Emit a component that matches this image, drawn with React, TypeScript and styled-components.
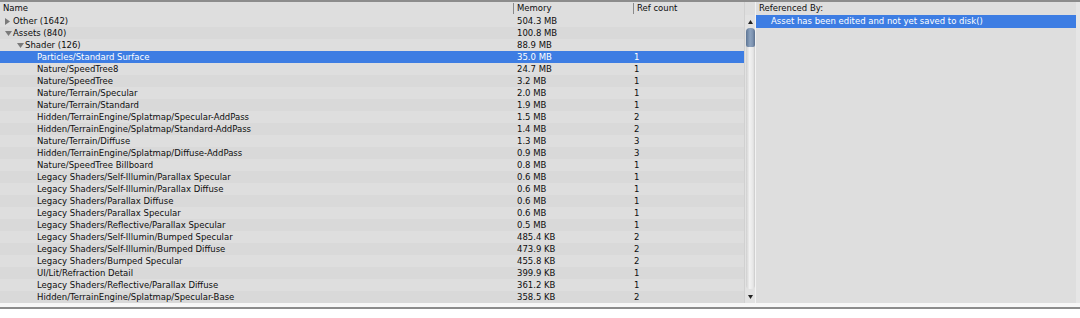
import React from "react";
import styled, { createGlobalStyle } from "styled-components";

const GlobalStyle = createGlobalStyle`
  html, body { margin: 0; padding: 0; background: #ffffff; }
  body { font-family: "DejaVu Sans", Verdana, sans-serif; }
`;

type Row = { name: string; mem: string; refs: string; level: number; toggle?: "open" | "closed"; selected?: boolean };

const rows: Row[] = [
  { name: "Other (1642)", mem: "504.3 MB", refs: "", level: 0, toggle: "closed" },
  { name: "Assets (840)", mem: "100.8 MB", refs: "", level: 0, toggle: "open" },
  { name: "Shader (126)", mem: "88.9 MB", refs: "", level: 1, toggle: "open" },
  { name: "Particles/Standard Surface", mem: "35.0 MB", refs: "1", level: 2, selected: true },
  { name: "Nature/SpeedTree8", mem: "24.7 MB", refs: "1", level: 2 },
  { name: "Nature/SpeedTree", mem: "3.2 MB", refs: "1", level: 2 },
  { name: "Nature/Terrain/Specular", mem: "2.0 MB", refs: "1", level: 2 },
  { name: "Nature/Terrain/Standard", mem: "1.9 MB", refs: "1", level: 2 },
  { name: "Hidden/TerrainEngine/Splatmap/Specular-AddPass", mem: "1.5 MB", refs: "2", level: 2 },
  { name: "Hidden/TerrainEngine/Splatmap/Standard-AddPass", mem: "1.4 MB", refs: "2", level: 2 },
  { name: "Nature/Terrain/Diffuse", mem: "1.3 MB", refs: "3", level: 2 },
  { name: "Hidden/TerrainEngine/Splatmap/Diffuse-AddPass", mem: "0.9 MB", refs: "3", level: 2 },
  { name: "Nature/SpeedTree Billboard", mem: "0.8 MB", refs: "1", level: 2 },
  { name: "Legacy Shaders/Self-Illumin/Parallax Specular", mem: "0.6 MB", refs: "1", level: 2 },
  { name: "Legacy Shaders/Self-Illumin/Parallax Diffuse", mem: "0.6 MB", refs: "1", level: 2 },
  { name: "Legacy Shaders/Parallax Diffuse", mem: "0.6 MB", refs: "1", level: 2 },
  { name: "Legacy Shaders/Parallax Specular", mem: "0.6 MB", refs: "1", level: 2 },
  { name: "Legacy Shaders/Reflective/Parallax Specular", mem: "0.5 MB", refs: "1", level: 2 },
  { name: "Legacy Shaders/Self-Illumin/Bumped Specular", mem: "485.4 KB", refs: "2", level: 2 },
  { name: "Legacy Shaders/Self-Illumin/Bumped Diffuse", mem: "473.9 KB", refs: "2", level: 2 },
  { name: "Legacy Shaders/Bumped Specular", mem: "455.8 KB", refs: "2", level: 2 },
  { name: "UI/Lit/Refraction Detail", mem: "399.9 KB", refs: "1", level: 2 },
  { name: "Legacy Shaders/Reflective/Parallax Diffuse", mem: "361.2 KB", refs: "1", level: 2 },
  { name: "Hidden/TerrainEngine/Splatmap/Specular-Base", mem: "358.5 KB", refs: "2", level: 2 },
];

const Window = styled.div`
  width: 1080px;
  height: 301px;
  display: flex;
  border-top: 2px solid #8c8c8c;
  background: #dedede;
  font-size: 8.5px;
  color: #0e0e0e;
`;

const LeftPane = styled.div`
  width: 744px;
  display: flex;
  flex-direction: column;
`;

const Grid = styled.div`
  display: grid;
  grid-template-columns: 514px 120px 1fr;
  height: 12px;
  line-height: 12px;
  white-space: nowrap;
`;

const HeaderRow = styled(Grid)`
  height: 13px;
  background: #dedede;
`;

const HeaderCell = styled.div<{ $sep?: boolean }>`
  padding-left: 3px;
  border-left: ${(p) => (p.$sep ? "1px solid #8a8a8a" : "none")};
  margin-left: ${(p) => (p.$sep ? -1 : 0)}px;
  height: 11px;
  margin-top: 1px;
  line-height: 11px;
`;

const DataRow = styled(Grid)<{ $odd: boolean; $selected?: boolean }>`
  background: ${(p) => (p.$selected ? "#3d7de3" : p.$odd ? "#d9d9d9" : "#dedede")};
  color: ${(p) => (p.$selected ? "#ffffff" : "#0e0e0e")};
`;

const NameCell = styled.div<{ $level: number }>`
  display: flex;
  align-items: center;
  padding-left: ${(p) => 1 + p.$level * 12}px;
`;

const Toggle = styled.span`
  width: 12px;
  height: 12px;
  display: flex;
  align-items: center;
  justify-content: flex-start;
  padding-left: 4px;
  box-sizing: border-box;
  flex: none;
`;

const Cell = styled.div<{ $pad: number }>`
  padding-left: ${(p) => p.$pad}px;
`;

const Scrollbar = styled.div`
  width: 11px;
  display: flex;
  flex-direction: column;
  align-items: center;
  background: #e2e2e2;
  border-left: 1px solid #d0d0d0;
  box-sizing: border-box;
`;

const ScrollTop = styled.div`
  height: 13px;
  width: 100%;
  background: #dedede;
`;

const ArrowBtn = styled.div`
  height: 13px;
  width: 100%;
  display: flex;
  align-items: center;
  justify-content: center;
  flex: none;
`;

const Track = styled.div`
  flex: 1;
  width: 9px;
  display: flex;
  flex-direction: column;
  border-radius: 4px;
  background: linear-gradient(to right, #cfcfcf, #f2f2f2 40%, #e6e6e6 80%, #c8c8c8);
  margin-bottom: 1px;
`;

const Thumb = styled.div`
  height: 19px;
  width: 9px;
  border-radius: 4px 4px 2px 2px;
  background: linear-gradient(to right, #5d7594, #8da3bf 45%, #7d93b1 75%, #5a6f8c);
`;

const RightPane = styled.div`
  flex: 1;
  display: flex;
  flex-direction: column;
  border-left: 1px solid #f2f2f2;
  border-right: 4px solid #e6e6e6;
  background: #dedede;
`;

const RightHeader = styled.div`
  height: 13px;
  line-height: 13px;
  padding-left: 3px;
`;

const RefRow = styled.div`
  height: 13px;
  line-height: 13px;
  padding-left: 15px;
  background: #3d7de3;
  color: #ffffff;
  white-space: nowrap;
`;

const Bottom = styled.div`
  height: 4px;
  background: #f7f7f7;
  border-bottom: 2px solid #8c8c8c;
`;

const TriRight = () => (
  <svg width="5" height="7" viewBox="0 0 5 7">
    <polygon points="0,0 5,3.5 0,7" fill="#7a7a7a" />
  </svg>
);
const TriDown = () => (
  <svg width="7" height="5" viewBox="0 0 7 5">
    <polygon points="0,0 7,0 3.5,5" fill="#7a7a7a" />
  </svg>
);
const SmallUp = () => (
  <svg width="5" height="4" viewBox="0 0 5 4">
    <polygon points="2.5,0 5,4 0,4" fill="#222" />
  </svg>
);
const SmallDown = () => (
  <svg width="5" height="4" viewBox="0 0 5 4">
    <polygon points="0,0 5,0 2.5,4" fill="#222" />
  </svg>
);

export default function App() {
  return (
    <>
      <GlobalStyle />
      <Window>
        <LeftPane>
          <HeaderRow>
            <HeaderCell>Name</HeaderCell>
            <HeaderCell $sep>Memory</HeaderCell>
            <HeaderCell $sep>Ref count</HeaderCell>
          </HeaderRow>
          {rows.map((r, i) => (
            <DataRow key={i} $odd={i % 2 === 1} $selected={r.selected}>
              <NameCell $level={r.level}>
                <Toggle>
                  {r.toggle === "closed" && <TriRight />}
                  {r.toggle === "open" && <TriDown />}
                </Toggle>
                {r.name}
              </NameCell>
              <Cell $pad={3}>{r.mem}</Cell>
              <Cell $pad={0}>{r.refs}</Cell>
            </DataRow>
          ))}
        </LeftPane>
        <Scrollbar>
          <ScrollTop />
          <ArrowBtn>
            <SmallUp />
          </ArrowBtn>
          <Track>
            <Thumb />
          </Track>
          <ArrowBtn>
            <SmallDown />
          </ArrowBtn>
        </Scrollbar>
        <RightPane>
          <RightHeader>Referenced By:</RightHeader>
          <RefRow>Asset has been edited and not yet saved to disk()</RefRow>
        </RightPane>
      </Window>
      <Bottom />
    </>
  );
}
